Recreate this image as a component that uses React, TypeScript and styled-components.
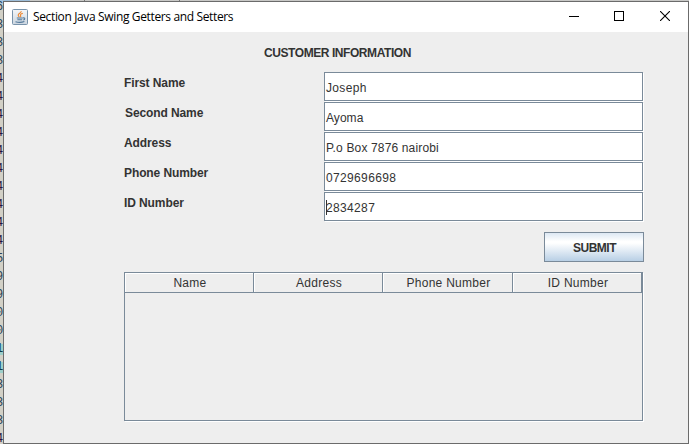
import React from "react";
import styled, { createGlobalStyle } from "styled-components";

const EDGE = "#7a8a99";
const PANEL = "#eeeeee";

const GlobalStyle = createGlobalStyle`
  * { box-sizing: border-box; }
  html, body { margin: 0; padding: 0; overflow: hidden; }
  body { background: #d0cfc8; }
`;

const Desktop = styled.div`
  display: grid;
  grid-template-columns: 3px 686px;
  width: 689px;
  height: 444px;
  overflow: hidden;
  background: linear-gradient(
    to right,
    #9dbdd8 0 30px, #c8c8c6 30px 84px,
    #777 84px 85px, #c8c8c6 85px 179px,
    #777 179px 180px, #c8c8c6 180px
  );
`;

const Gutter = styled.div`
  display: flex;
  flex-direction: column;
  align-items: flex-end;
  width: 3px;
  height: 444px;
  overflow: hidden;
  background: linear-gradient(to bottom, #a9c6de 0 4px, #d2d0c6 4px);
`;

const LineDigit = styled.span<{ $tone: string; $marked?: boolean }>`
  flex: none;
  width: 7px;
  height: 18px;
  font: 12px/18px "Liberation Mono", monospace;
  color: ${(p) => p.$tone};
  background: ${(p) => (p.$marked ? "linear-gradient(transparent 0 4px, #9ccfca 4px 15px, transparent 15px)" : "transparent")};

  &:first-child { margin-top: -2px; }
`;

const Frame = styled.div`
  display: flex;
  flex-direction: column;
  height: 443px;
  margin-top: 1px;
  border: 1px solid #6b6b6b;
  background: ${PANEL};
`;

const TitleBar = styled.header`
  display: flex;
  align-items: center;
  height: 30px;
  flex: none;
  padding-left: 8px;
  background: #fff;
`;

const Title = styled.h1`
  flex: 1;
  margin: 0 0 0 5px;
  font: 400 12px/16px "Open Sans", "Noto Sans", sans-serif;
  letter-spacing: -0.36px;
  color: #000;
  white-space: nowrap;
`;

const Controls = styled.div`
  display: flex;
  gap: 35px;
  padding: 0 18px 2px 0;
  svg { display: block; }
  svg:last-child { margin-left: 1px; }
`;

const Content = styled.main`
  display: flex;
  flex-direction: column;
  padding: 12px 44px 0 120px;
`;

const Heading = styled.h2`
  margin: 0 0 0 140px;
  height: 28px;
  font: 700 12px/18px "Liberation Sans", Arial, sans-serif;
  letter-spacing: -0.43px;
  color: #333;
  white-space: nowrap;
`;

const FormRow = styled.div`
  display: grid;
  grid-template-columns: 200px 320px;
  height: 30px;
`;

const Label = styled.label<{ $indent?: number }>`
  padding: 2px 0 0 ${(p) => p.$indent ?? 0}px;
  font: 700 12px/18px "Liberation Sans", Arial, sans-serif;
  letter-spacing: -0.1px;
  color: #333;
  white-space: nowrap;
`;

const Field = styled.div`
  display: flex;
  height: 29px;
  width: 319px;
  padding: 7px 0 0 1px;
  border: 1px solid ${EDGE};
  background: #fff;
  box-shadow: 1px 1px 0 #fff;
`;

const Caret = styled.i`
  width: 1px;
  height: 15px;
  margin-right: -1px;
  background: #333;
`;

const Value = styled.span<{ $track: number }>`
  font: 400 12px/16px "Liberation Sans", Arial, sans-serif;
  letter-spacing: ${(p) => p.$track}px;
  color: #333;
  white-space: nowrap;
`;

const Submit = styled.button`
  align-self: flex-end;
  width: 100px;
  height: 30px;
  margin: 10px 0;
  padding: 1px 0 0 1px;
  border: 1px solid ${EDGE};
  border-radius: 0;
  background: linear-gradient(#dde8f3 0%, #ffffff 30%, #ffffff 36%, #b8cfe5 100%);
  font: 700 12px/16px "Liberation Sans", Arial, sans-serif;
  letter-spacing: -0.5px;
  color: #333;
`;

const Table = styled.section`
  width: 519px;
  height: 149px;
  border: 1px solid ${EDGE};
  box-shadow: 1px 1px 0 #fff;
`;

const TableHead = styled.div`
  display: grid;
  grid-template-columns: 129px 129px 130px 129px;
  grid-template-rows: 20px;
`;

const HeadCell = styled.div`
  height: 20px;
  padding: 2px 0 0 2px;
  border-right: 1px solid ${EDGE};
  border-bottom: 1px solid ${EDGE};
  box-shadow: inset 1px 1px 0 #fff;
  font: 400 12px/17px "Liberation Sans", Arial, sans-serif;
  letter-spacing: 0.28px;
  text-align: center;
  color: #333;
  white-space: nowrap;
`;

const lineDigits = ["6", "3", "3", "3", ..."4444444444", "5", "9", "9", "0", "0", "1", "1", "3", "3", "3", "4"];
const tones: Record<string, string> = { "4": "#28133f", "1": "#143c48" };

const fields = [
  { label: "First Name", value: "Joseph", track: 0.35 },
  { label: "Second Name", value: "Ayoma", indent: 1, track: 0.05 },
  { label: "Address", value: "P.o Box 7876 nairobi", track: 0.15 },
  { label: "Phone Number", value: "0729696698", track: 0.35 },
  { label: "ID Number", value: "2834287", focused: true, track: 0.35 },
];

const columns = ["Name", "Address", "Phone Number", "ID Number"];

const JavaIcon = () => (
  <svg width="16" height="16" viewBox="0 0 16 16">
    <defs>
      <linearGradient id="tile" x1="0" y1="0" x2="0" y2="1">
        <stop offset="0" stopColor="#f4f6f8" />
        <stop offset="1" stopColor="#cbd5df" />
      </linearGradient>
    </defs>
    <rect x="0.5" y="0.5" width="15" height="15" rx="1" fill="url(#tile)" stroke="#7893ab" />
    <path d="M9.2 2.2C9.6 4 5.8 4.6 6.2 6.3c.1.8.8 1.1 1.1 1.8M10.8 4.2C9.3 4.8 8 5.5 8.6 6.5c.4.7.2 1.1-.4 1.5" fill="none" stroke="#ee862e" strokeWidth="1.1" />
    <path d="M4.8 9h6M5.4 10.8h4.8M3.5 12.7c2.4.8 6.3.8 8.9-.1M11 9c2.4-.6 2.2 1.6.2 2" fill="none" stroke="#52789a" strokeWidth="1.1" />
  </svg>
);

export default function App() {
  return (
    <>
      <GlobalStyle />
      <Desktop>
        <Gutter>
          {lineDigits.map((d, i) => (
            <LineDigit key={i} $tone={tones[d] ?? "#2a4358"} $marked={d === "1"}>{d}</LineDigit>
          ))}
        </Gutter>
        <Frame>
          <TitleBar>
            <JavaIcon />
            <Title>Section Java Swing Getters and Setters</Title>
            <Controls>
              <svg width="10" height="10"><path d="M0 5.5h10" stroke="#000" /></svg>
              <svg width="10" height="10"><rect x="0.5" y="0.5" width="9" height="9" fill="none" stroke="#000" /></svg>
              <svg width="10" height="10"><path d="M0 0l10 10M10 0L0 10" stroke="#000" strokeWidth="1.1" /></svg>
            </Controls>
          </TitleBar>
          <Content>
            <Heading>CUSTOMER INFORMATION</Heading>
            {fields.map((f) => (
              <FormRow key={f.label}>
                <Label $indent={f.indent}>{f.label}</Label>
                <Field>
                  {f.focused && <Caret />}
                  <Value $track={f.track}>{f.value}</Value>
                </Field>
              </FormRow>
            ))}
            <Submit>SUBMIT</Submit>
            <Table>
              <TableHead>
                {columns.map((c) => (
                  <HeadCell key={c}>{c}</HeadCell>
                ))}
              </TableHead>
            </Table>
          </Content>
        </Frame>
      </Desktop>
    </>
  );
}
